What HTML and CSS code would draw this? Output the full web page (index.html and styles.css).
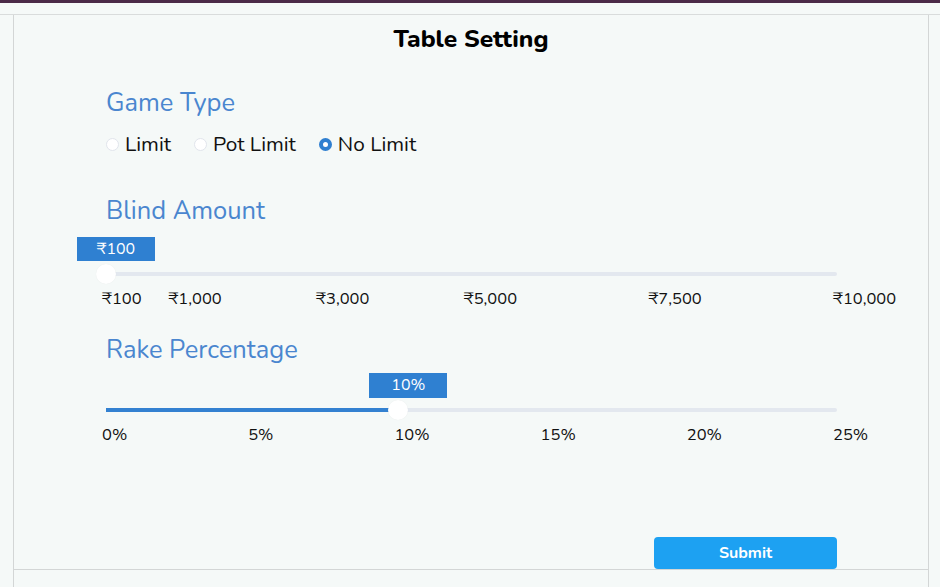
FILE: index.html
```html
<!DOCTYPE html>
<html>
<head>
<meta charset="utf-8">
<link rel="stylesheet" href="styles.css">
</head>
<body>
<div class="topbar"></div>
<div class="frame">
  <div class="panel">
    <div class="content">
      <h1 class="title">Table Setting</h1>
      <div class="form">
        <h2 class="heading first">Game Type</h2>
        <div class="radios">
          <label class="radio"><span class="dot"></span>Limit</label>
          <label class="radio"><span class="dot"></span>Pot Limit</label>
          <label class="radio checked"><span class="dot"></span>No Limit</label>
        </div>

        <h2 class="heading blind">Blind Amount</h2>
        <div class="slider">
          <div class="tip" style="left:0%">₹100</div>
          <div class="track"><div class="fill" style="width:0%"></div></div>
          <div class="thumb" style="left:0%"></div>
        </div>
        <div class="scale">
          <span class="tick" style="left:0%">₹100</span>
          <span class="tick" style="left:9.09%">₹1,000</span>
          <span class="tick" style="left:29.29%">₹3,000</span>
          <span class="tick" style="left:49.49%">₹5,000</span>
          <span class="tick" style="left:74.75%">₹7,500</span>
          <span class="tick" style="left:100%">₹10,000</span>
        </div>

        <h2 class="heading rake">Rake Percentage</h2>
        <div class="slider rake-slider">
          <div class="tip" style="left:40%">10%</div>
          <div class="track"><div class="fill" style="width:40%"></div></div>
          <div class="thumb" style="left:40%"></div>
        </div>
        <div class="scale">
          <span class="tick" style="left:0%">0%</span>
          <span class="tick" style="left:20%">5%</span>
          <span class="tick" style="left:40%">10%</span>
          <span class="tick" style="left:60%">15%</span>
          <span class="tick" style="left:80%">20%</span>
          <span class="tick" style="left:100%">25%</span>
        </div>

        <div class="actions">
          <button class="submit">Submit</button>
        </div>
      </div>
    </div>
  </div>
</div>
</body>
</html>
```

FILE: styles.css
```css
html, body {
  margin: 0;
  padding: 0;
  background: #f5f9f8;
  font-family: "Nunito", "Lato", "Open Sans", sans-serif;
  height: 587px;
  overflow: hidden;
}
.topbar {
  height: 3px;
  background: #4b2a48;
}
.frame {
  margin-top: 11px;
  border-top: 1px solid #d9dcdc;
}
.panel {
  margin-left: 13px;
  width: 914px;
  border-left: 1px solid #d3d6d6;
  border-right: 1px solid #d3d6d6;
  height: 600px;
}
.content {
  border-bottom: 1px solid #d3d6d6;
}
.title {
  margin: 0;
  text-align: center;
  font-size: 24.5px;
  line-height: 48px;
  font-weight: 800;
  color: #000;
}
.form {
  margin-left: 92px;
  width: 731px;
}
.heading {
  margin: 0;
  font-size: 25.5px;
  line-height: 32px;
  font-weight: 400;
  color: #4a86cf;
}
.heading.first { margin-top: 24px; }
.heading.blind { margin-top: 38px; }
.heading.rake { margin-top: 23px; }
.radios {
  margin-top: 12px;
  display: flex;
  gap: 23px;
  height: 26px;
  align-items: center;
}
.radio {
  display: flex;
  align-items: center;
  gap: 6px;
  font-size: 20.8px;
  line-height: 26px;
  color: #111;
}
.dot {
  width: 11px;
  height: 11px;
  border-radius: 50%;
  border: 1px solid #e1e5ec;
  background: #fff;
  box-sizing: content-box;
}
.radio.checked .dot {
  width: 5px;
  height: 5px;
  border: 4px solid #2f7fd0;
}
.slider {
  position: relative;
  height: 49px;
  margin-top: 10px;
}
.rake-slider { margin-top: 7px; }
.rake-slider .tip { height: 25px; line-height: 25px; }
.track {
  position: absolute;
  left: 0;
  right: 0;
  top: 35px;
  height: 4px;
  background: #e3e8ef;
  border-radius: 2px;
}
.fill {
  height: 100%;
  background: #3381d1;
}
.thumb {
  position: absolute;
  top: 27px;
  width: 20px;
  height: 20px;
  margin-left: -10px;
  border-radius: 50%;
  background: #fff;
  box-shadow: 0 0 1px rgba(0,0,0,0.08);
}
.tip {
  position: absolute;
  top: 0;
  margin-left: -29px;
  width: 78px;
  height: 24px;
  background: #2f80d1;
  color: #fff;
  font-size: 16px;
  line-height: 24px;
  text-align: center;
}
.scale {
  position: relative;
  height: 24px;
  margin-top: 1px;
}
.tick {
  position: absolute;
  top: 0;
  margin-left: -4px;
  font-size: 16.5px;
  line-height: 24px;
  color: #111;
  white-space: nowrap;
}
.actions {
  margin-top: 90px;
  display: flex;
  justify-content: flex-end;
}
.submit {
  width: 183px;
  height: 32px;
  border: none;
  border-radius: 4px;
  background: #1da1f2;
  color: #fff;
  font-family: "Nunito", "Lato", "Open Sans", sans-serif;
  font-weight: 700;
  font-size: 16px;
  padding: 0;
}
```
